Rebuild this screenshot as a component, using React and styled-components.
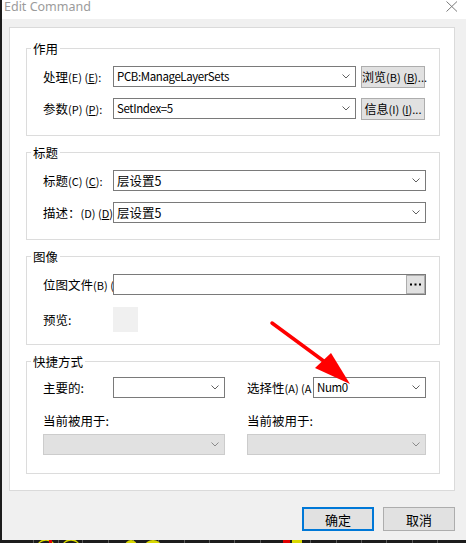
import React from "react";
import styled, { createGlobalStyle } from "styled-components";

const GlobalStyle = createGlobalStyle`
  html, body {
    margin: 0;
    padding: 0;
    background: #1c1c1c;
  }
  body {
    font-family: "Noto Sans CJK SC", "Noto Sans", sans-serif;
    font-size: 12.5px;
    color: #000;
  }
  #root {
    position: relative;
    width: 466px;
    height: 543px;
    overflow: hidden;
  }
`;

const Window = styled.div`
  margin-left: 2px;
  width: 464px;
  height: 540px;
  background: #f0f0f0;
  display: flex;
  flex-direction: column;
`;

const TitleBar = styled.div`
  height: 19px;
  flex: none;
  background: #fff;
  display: flex;
  justify-content: space-between;
  align-items: flex-start;
  padding: 0 8px 0 2px;
`;

const Title = styled.span`
  font-family: "Noto Sans", sans-serif;
  font-size: 12.5px;
  line-height: 13px;
  color: #9b9b9b;
`;

const CloseIcon = styled.svg`
  margin-top: 1px;
`;

const Client = styled.div`
  flex: 1;
  padding: 8px 0 0 7px;
`;

const Panel = styled.div`
  box-sizing: border-box;
  width: 446px;
  height: 464px;
  background: #fff;
  border: 1px solid #dadada;
  padding: 20px 14px 0 16px;
  display: flex;
  flex-direction: column;
  gap: 16px;
`;

const Group = styled.div`
  position: relative;
  box-sizing: border-box;
  height: ${(p) => p.$h}px;
  border: 1px solid #dcdcdc;
  padding: ${(p) => p.$pt}px 14px 0 16px;
  display: flex;
  flex-direction: column;
  gap: ${(p) => p.$gap || 11}px;
`;

const Legend = styled.span`
  position: absolute;
  top: -9px;
  left: 4px;
  padding: 0 2px;
  background: #fff;
  line-height: 18px;
`;

const Row = styled.div`
  display: flex;
  align-items: center;
  height: ${(p) => p.$h || 21}px;
`;

const Label = styled.span`
  flex: none;
  width: ${(p) => p.$w || 70}px;
  white-space: nowrap;
  overflow: ${(p) => (p.$clip ? "hidden" : "visible")};
  line-height: 18px;
`;

const Small = styled.span`
  font-size: 11px;
`;

const Combo = styled.div`
  flex: none;
  box-sizing: border-box;
  width: ${(p) => p.$w}px;
  height: 21px;
  border: 1px solid ${(p) => (p.$disabled ? "#cccccc" : "#7a7a7a")};
  background: ${(p) => (p.$disabled ? "#e1e1e1" : "#fff")};
  display: flex;
  align-items: center;
  justify-content: space-between;
  padding: 0 5px 0 3px;
  white-space: nowrap;
`;

const Value = styled.span`
  font-size: ${(p) => (p.$latin ? "11.5px" : "12.5px")};
  letter-spacing: ${(p) => (p.$latin ? "-0.4px" : "0")};
  line-height: 17px;
`;

const SideButton = styled.button`
  flex: none;
  box-sizing: border-box;
  width: 64px;
  height: 22px;
  margin-left: 5px;
  padding: 0;
  border: 1px solid #adadad;
  background: #e1e1e1;
  font-family: inherit;
  font-size: 12px;
  line-height: 18px;
  white-space: nowrap;
  color: #000;
`;

const FileBox = styled.div`
  flex: none;
  box-sizing: border-box;
  width: 313px;
  height: 21px;
  border: 1px solid #7a7a7a;
  background: #fff;
  display: flex;
  justify-content: flex-end;
`;

const DotsButton = styled.div`
  box-sizing: border-box;
  width: 19px;
  height: 19px;
  border: 1px solid #adadad;
  background: #e1e1e1;
  display: flex;
  align-items: center;
  justify-content: center;
`;

const Preview = styled.div`
  width: 25px;
  height: 25px;
  background: #f0f0f0;
`;

const Shortcuts = styled.div`
  display: grid;
  grid-template-columns: 182px 179px;
  column-gap: 22px;
`;

const Cell = styled.div`
  display: flex;
  align-items: center;
  margin-top: ${(p) => p.$mt || 0}px;
`;

const Footer = styled.div`
  display: flex;
  justify-content: flex-end;
  gap: 9px;
  width: 446px;
  margin-top: 16px;
`;

const DialogButton = styled.button`
  box-sizing: border-box;
  width: 72px;
  height: 24px;
  padding: 0;
  background: #e1e1e1;
  border: ${(p) => (p.$primary ? "2px solid #0078d7" : "1px solid #adadad")};
  font-family: inherit;
  font-size: 13px;
  color: #000;
`;

const Ground = styled.svg`
  display: block;
`;

const Overlay = styled.svg`
  position: absolute;
  left: 0;
  top: 0;
  pointer-events: none;
`;

const Chevron = ({ disabled }) => (
  <svg width="8" height="5" viewBox="0 0 8 5">
    <polyline
      points="0.5,0.5 4,4 7.5,0.5"
      fill="none"
      stroke={disabled ? "#8a8a8a" : "#606060"}
      strokeWidth="1"
    />
  </svg>
);

const Select = ({ w, value, latin, disabled }) => (
  <Combo $w={w} $disabled={disabled}>
    <Value $latin={latin}>{value}</Value>
    <Chevron disabled={disabled} />
  </Combo>
);

const App = () => {
  return (
    <>
      <GlobalStyle />
      <Window>
        <TitleBar>
          <Title>Edit Command</Title>
          <CloseIcon width="12" height="11" viewBox="0 0 12 11">
            <path d="M0.5 0.5 L11 10.5 M11 0.5 L0.5 10.5" stroke="#7a7a7a" strokeWidth="1" />
          </CloseIcon>
        </TitleBar>
        <Client>
          <Panel>
            <Group $h={88} $pt={17}>
              <Legend>作用</Legend>
              <Row>
                <Label>
                  处理<Small>(E) (<u>E</u>):</Small>
                </Label>
                <Select w={243} value="PCB:ManageLayerSets" latin />
                <SideButton>
                  浏览<Small>(B) (<u>B</u>)...</Small>
                </SideButton>
              </Row>
              <Row>
                <Label>
                  参数<Small>(P) (<u>P</u>):</Small>
                </Label>
                <Select w={243} value="SetIndex=5" latin />
                <SideButton>
                  信息<Small>(I) (<u>I</u>)...</Small>
                </SideButton>
              </Row>
            </Group>

            <Group $h={88} $pt={17}>
              <Legend>标题</Legend>
              <Row>
                <Label>
                  标题<Small>(C) (<u>C</u>):</Small>
                </Label>
                <Select w={313} value="层设置5" />
              </Row>
              <Row>
                <Label>
                  描述：<Small>(D) (<u>D</u>)</Small>
                </Label>
                <Select w={313} value="层设置5" />
              </Row>
            </Group>

            <Group $h={89} $pt={17} $gap={12}>
              <Legend>图像</Legend>
              <Row>
                <Label $clip>
                  位图文件<Small>(B) (</Small>
                </Label>
                <FileBox>
                  <DotsButton>
                    <svg width="11" height="3" viewBox="0 0 11 3">
                      <rect x="0" y="0.5" width="2" height="2" fill="#000" />
                      <rect x="4.5" y="0.5" width="2" height="2" fill="#000" />
                      <rect x="9" y="0.5" width="2" height="2" fill="#000" />
                    </svg>
                  </DotsButton>
                </FileBox>
              </Row>
              <Row $h={25}>
                <Label>预览:</Label>
                <Preview />
              </Row>
            </Group>

            <Group $h={113} $pt={15}>
              <Legend>快捷方式</Legend>
              <Shortcuts>
                <Cell>
                  <Label>主要的:</Label>
                  <Select w={112} value="" />
                </Cell>
                <Cell>
                  <Label $w={66} $clip>
                    选择性<Small>(A) (A</Small>
                  </Label>
                  <Select w={113} value="Num0" latin />
                </Cell>
                <Cell $mt={14}>
                  <Label $w={120}>当前被用于:</Label>
                </Cell>
                <Cell $mt={14}>
                  <Label $w={120}>当前被用于:</Label>
                </Cell>
                <Cell $mt={4}>
                  <Select w={182} value="" disabled />
                </Cell>
                <Cell $mt={4}>
                  <Select w={179} value="" disabled />
                </Cell>
              </Shortcuts>
            </Group>
          </Panel>
          <Footer>
            <DialogButton $primary>确定</DialogButton>
            <DialogButton>取消</DialogButton>
          </Footer>
        </Client>
      </Window>
      <Ground width="466" height="3" viewBox="0 0 466 3">
        {[33, 58, 82, 108, 133, 158, 184, 209, 234, 260, 285, 310, 336, 361, 386, 412, 437].map((x) => (
          <rect key={x} x={x} y="0" width="1" height="3" fill="#5a5a5a" />
        ))}
        <ellipse cx="46" cy="6" rx="8" ry="6" fill="none" stroke="#d8d800" strokeWidth="1.5" />
        <rect x="49" y="0" width="3" height="3" fill="#e00000" />
        <ellipse cx="71" cy="6" rx="8" ry="6" fill="none" stroke="#d8d800" strokeWidth="1.5" />
        <ellipse cx="131" cy="6" rx="6" ry="6" fill="#d8d800" />
        <ellipse cx="153" cy="6" rx="8" ry="6" fill="#d8d800" />
        <rect x="283" y="0" width="7" height="3" fill="#e00000" />
        <rect x="292" y="0" width="10" height="3" fill="#d8d800" />
      </Ground>
      <Overlay width="466" height="543" viewBox="0 0 466 543">
        <line x1="272" y1="323" x2="325" y2="362" stroke="#ff0000" strokeWidth="3.5" strokeLinecap="round" />
        <polygon points="315,368 331,353 350,384" fill="#ff0000" />
      </Overlay>
    </>
  );
};

export default App;
